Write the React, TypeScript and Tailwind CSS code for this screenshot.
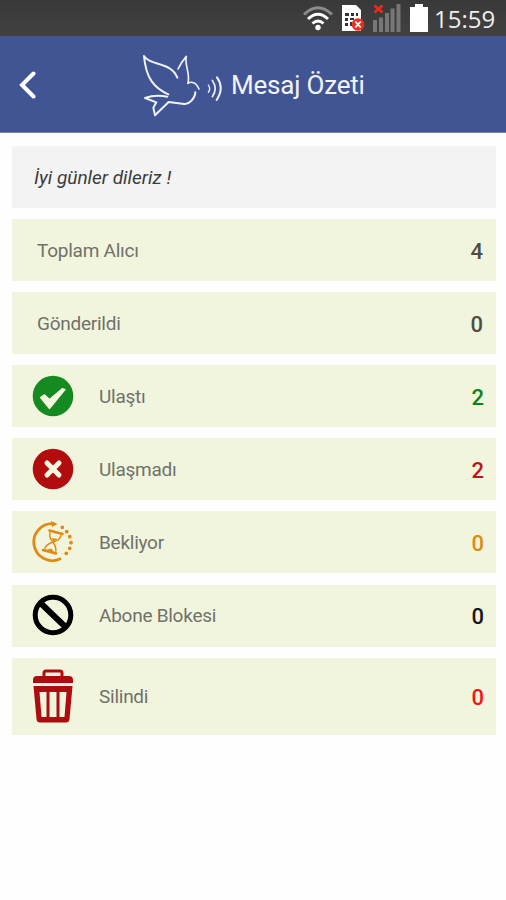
import type { ReactNode } from "react";

function WifiIcon() {
    return (
        <svg width="32" height="26" viewBox="0 0 32 26" fill="none" strokeWidth="3">
            <path d="M2 9.5 Q16 -4 30 9.5" stroke="#8c8c8c" />
            <path d="M6 14 Q16 4.5 26 14" stroke="#fff" />
            <path d="M10.5 18.5 Q16 13.5 21.5 18.5" stroke="#fff" />
            <circle cx="16" cy="22.5" r="2.7" fill="#fff" />
        </svg>
    );
}

function SimIcon() {
    return (
        <svg width="24" height="28" viewBox="0 0 24 28">
            <path d="M1 1 H15 L20 6 V27 H1 Z" fill="#fff" />
            <path d="M4 9 h4 v3 h-4z M10 9 h3 v3 h-3z M15 9 h2 v3 h-2z M4 14 h3 v3 h-3z M9 14 h4 v2 h-4z M4 19 h3 v3 h-3z M9 18 h2 v4 h-2z" fill="#333" />
            <circle cx="17" cy="20.5" r="6.3" fill="#e8311f" />
            <path d="M14.3 17.5 l5.4 6 M19.7 17.5 l-5.4 6" stroke="#fff" strokeWidth="1.8" />
        </svg>
    );
}

function SignalIcon() {
    return (
        <svg width="28" height="28" viewBox="0 0 28 28">
            <path d="M0 16 h4 v12 h-4z M6 13.5 h4 v14.5 h-4z M12 9 h4 v19 h-4z M17.5 4.5 h4 v23.5 h-4z M23.5 0 h4 v28 h-4z" fill="#777" />
            <path d="M1.5 1.5 l8 7 M9.5 1.5 l-8 7" stroke="#ee2a1a" strokeWidth="2.8" />
        </svg>
    );
}

function BatteryIcon() {
    return (
        <svg width="18" height="28" viewBox="0 0 18 28">
            <path d="M5 0 h8 v3 h5 v25 h-18 v-25 h5z" fill="#fff" />
        </svg>
    );
}

function DoveLogo() {
    return (
        <svg width="80" height="64" viewBox="39 30 240 192" fill="none" stroke="#eef2ff" strokeLinecap="round" strokeLinejoin="round">
            <path d="M115 151 C72 132 48 103 42 36 C61 67 123 52 142 101" strokeWidth="6" />
            <path d="M144 75 Q155 53 169 37 C163 67 181 82 174 118" strokeWidth="5" />
            <path d="M174 117 Q195 108 207 135" strokeWidth="5" />
            <path d="M196 145 C195 165 174 182 163 180 L116 174 L75 214 L70 191 L79 175 L45 162 Q76 151 112 158" strokeWidth="6" />
            <path d="M235 123 Q243 135 235 145" strokeWidth="4" />
            <path d="M247 109 Q264 135 247 158" strokeWidth="5" />
            <path d="M261 100 Q284 132 260 168" strokeWidth="6" />
        </svg>
    );
}

function DeliveredIcon() {
    return (
        <svg width="42" height="42" viewBox="0 0 42 42">
            <circle cx="21" cy="21" r="20.3" fill="#158a20" />
            <path d="M8.5 22.5 L12.5 19.8 L17.5 24.5 L30.5 13.5 L33 14.5 L17.5 33.5 Z" fill="#f7f9df" stroke="#f7f9df" strokeWidth="1.2" strokeLinejoin="round" />
        </svg>
    );
}

function FailedIcon() {
    return (
        <svg width="42" height="42" viewBox="0 0 42 42">
            <circle cx="21" cy="21" r="20.3" fill="#b30c0f" />
            <path d="M15 15 L27 27 M27 15 L15 27" stroke="#f7f9df" strokeWidth="5" strokeLinecap="round" />
        </svg>
    );
}

function PendingIcon() {
    return (
        <svg width="42" height="42" viewBox="0 0 42 42" fill="none" stroke="#e08a10">
            <path d="M22.5 2.8 A18.5 18.5 0 1 0 29 37.5" strokeWidth="2.8" />
            <path d="M19 0 L25.5 3 L20 6 Z" fill="#e08a10" stroke="none" />
            <path d="M30.3 6.3 h.01 M34.7 10.7 h.01 M37.7 15.7 h.01 M39 21.7 h.01 M37.7 27.3 h.01 M34.3 32.3 h.01" strokeWidth="3.8" strokeLinecap="round" />
            <path d="M17.5 9.5 L30.5 13 M11 29 L24 32.5" strokeWidth="2.6" strokeLinecap="round" />
            <path d="M18 11 C17 17 19 19 21 21 C15 23 13 25 12.5 29 M29 14 C28 19 25 20 21 21 C23 24 25 27 23.5 32" strokeWidth="1.4" />
            <path d="M19.5 17 L26 18 L21.5 20.5 Z M14 29 L19 27.5 L22.5 31 Z" fill="#e08a10" stroke="none" />
        </svg>
    );
}

function BlockedIcon() {
    return (
        <svg width="42" height="42" viewBox="0 0 42 42" fill="none" stroke="#000">
            <circle cx="21" cy="21" r="17.8" strokeWidth="5" />
            <path d="M8.5 9 L33.5 33" strokeWidth="6" />
        </svg>
    );
}

function TrashIcon() {
    return (
        <svg width="42" height="54" viewBox="0 0 42 54">
            <path d="M12 8 V4 Q12 2 14 2 H28 Q30 2 30 4 V8" fill="none" stroke="#ae0c0e" strokeWidth="3" />
            <path d="M1 14 V11 Q1 7 5 7 H37 Q41 7 41 11 V14 Z" fill="#ae0c0e" />
            <path fillRule="evenodd" d="M1.5 17 H40.5 L37.5 50 Q37.2 53.5 34 53.5 H8 Q4.8 53.5 4.5 50 Z M7.5 23 L9.5 48 H14.5 V23 Z M17.5 23 V48 H24.5 V23 Z M27.5 23 V48 H32.5 L34.5 23 Z" fill="#ae0c0e" />
        </svg>
    );
}

type Row = {
    label: string;
    value: number;
    color: string;
    icon?: ReactNode;
    tall?: boolean;
};

const rows: Row[] = [
    { label: "Toplam Alıcı", value: 4, color: "text-[#4c4d45]" },
    { label: "Gönderildi", value: 0, color: "text-[#4c4d45]" },
    { label: "Ulaştı", value: 2, color: "text-[#0b8510]", icon: <DeliveredIcon /> },
    { label: "Ulaşmadı", value: 2, color: "text-[#bd1516]", icon: <FailedIcon /> },
    { label: "Bekliyor", value: 0, color: "text-[#e08a10]", icon: <PendingIcon /> },
    { label: "Abone Blokesi", value: 0, color: "text-[#151515]", icon: <BlockedIcon /> },
    { label: "Silindi", value: 0, color: "text-[#f81414]", icon: <TrashIcon />, tall: true },
];

function SummaryRow({ label, value, color, icon, tall }: Row) {
    return (
        <div className={`flex items-center bg-[#f2f5dd] pr-3 ${tall ? "h-[77px]" : "h-[62px]"} ${icon ? "pl-[20.4px]" : "pl-[25px]"}`}>
            {icon && <div className="w-[66.6px] shrink-0 pb-px">{icon}</div>}
            <span className="grow pt-[2px] text-[19px] tracking-[-0.25px] text-[#70716a]">{label}</span>
            <span className={`pt-[2px] text-[22px] font-medium ${icon ? "" : "pr-px"} ${color}`}>{value}</span>
        </div>
    );
}

export default function App() {
    return (
        <div className="h-[900px] w-[506px] overflow-hidden bg-[#fefefe] font-[Roboto,sans-serif]">
            <div className="flex h-9 items-center justify-end bg-linear-to-b from-[#393939] to-[#414141] pr-[10px]">
                <WifiIcon />
                <div className="ml-[7px]"><SimIcon /></div>
                <div className="ml-2"><SignalIcon /></div>
                <div className="ml-[9px]"><BatteryIcon /></div>
                <span className="ml-[6px] w-[62px] pt-[2px] font-['Open_Sans',sans-serif] text-[24px] leading-none font-medium text-[#eee]">15:59</span>
            </div>
            <header className="flex h-[97px] items-center border-b border-[#7380ad] bg-[#415595] pt-[2px] pl-[19px]">
                <svg width="18" height="28" viewBox="0 0 18 28" fill="none">
                    <path d="M14.5 2.5 L3 14 L14.5 25.5" stroke="#fff" strokeWidth="4" strokeLinecap="round" />
                </svg>
                <div className="ml-[106px] pt-[2px]"><DoveLogo /></div>
                <h1 className="ml-2 text-[26px] tracking-[-0.2px] whitespace-nowrap text-[#f2f4ff]">Mesaj Özeti</h1>
            </header>
            <main className="flex flex-col gap-[11.1px] pt-[13px] pr-[10px] pl-3">
                <div className="flex h-[62px] items-center bg-[#f3f3f3] pt-[2px] pl-[22px] text-[19px] text-[#3b3b3b] italic">
                    İyi günler dileriz !
                </div>
                {rows.map((row) => (
                    <SummaryRow key={row.label} {...row} />
                ))}
            </main>
        </div>
    );
}
